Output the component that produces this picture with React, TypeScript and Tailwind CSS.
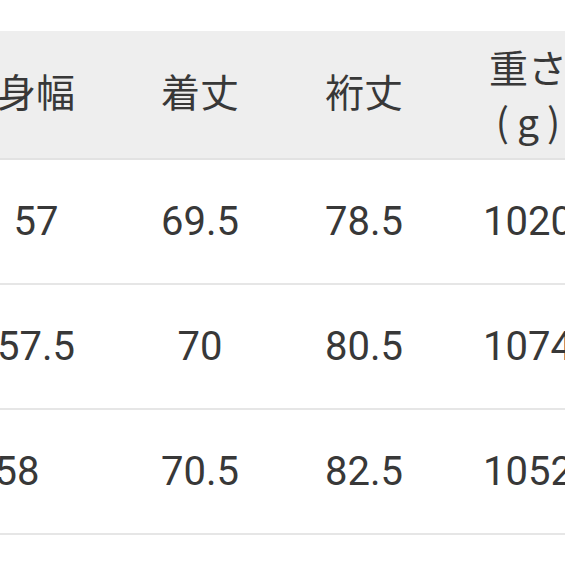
import React from "react";

const font = { fontFamily: 'Roboto, "Noto Sans CJK JP", sans-serif' };

const rows: { c: string[]; first: string }[] = [
  { c: ["57", "69.5", "78.5", "1020"], first: "pl-0" },
  { c: ["57.5", "70", "80.5", "1074"], first: "pl-0" },
  { c: ["58", "70.5", "82.5", "1052"], first: "pr-[38px]" },
];

export default function App() {
  return (
    <div className="w-[565px] h-[565px] overflow-hidden bg-white pt-[31px]" style={font}>
      <div className="ml-[-46px] w-[656px] text-[#383838]">
        <div className="grid grid-cols-4 h-[129px] bg-[#eeeeee] border-b-2 border-[#e2e2e2] text-[39px]">
          <div className="flex items-center justify-center">身幅</div>
          <div className="flex items-center justify-center">着丈</div>
          <div className="flex items-center justify-center">裄丈</div>
          <div className="flex flex-col items-center justify-center leading-[50px]">
            <span>重さ</span>
            <span className="flex items-center gap-[8px] font-[Noto_Sans_CJK_JP]">
              <span>(</span>
              <span>g</span>
              <span>)</span>
            </span>
          </div>
        </div>
        {rows.map((r, i) => (
          <div key={i} className="grid grid-cols-4 h-[125px] border-b-2 border-[#e6e6e6] text-[40px]">
            {r.c.map((v, j) => (
              <div key={j} className={`flex items-center justify-center ${j === 0 ? r.first : ""}`}>
                {v}
              </div>
            ))}
          </div>
        ))}
      </div>
    </div>
  );
}
